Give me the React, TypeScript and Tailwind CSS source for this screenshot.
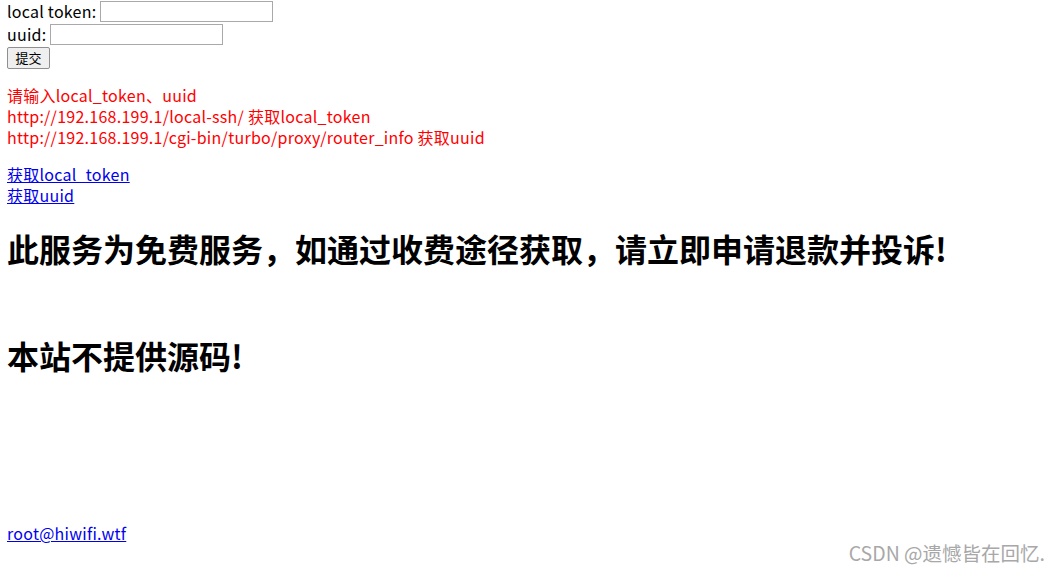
import React from "react";

const font = '"Noto Sans CJK SC", sans-serif';

export default function App() {
  return (
    <div
      className="relative h-[573px] w-[1059px] overflow-hidden bg-white px-[7px] text-[16px] text-black"
      style={{ fontFamily: font }}
    >
      <form onSubmit={(e) => e.preventDefault()} className="tracking-[0.25px]">
        <div className="flex h-[23px] items-center leading-[21px]">
          <span>local token:</span>
          <input className="ml-[4px] h-[21px] w-[173px] border border-[#a9a9a9] bg-white px-1 outline-none" />
        </div>
        <div className="flex h-[23px] items-center leading-[21px]">
          <span>uuid:</span>
          <input className="ml-[4px] h-[21px] w-[173px] border border-[#a9a9a9] bg-white px-1 outline-none" />
        </div>
        <div className="flex h-[24px] items-center">
          <button
            type="submit"
            className="h-[22px] w-[43px] rounded-[2px] border border-[#8f8f8f] bg-[#efefef] text-[13px] leading-[18px] tracking-normal"
          >
            提交
          </button>
        </div>
      </form>

      <div className="mt-[15px] leading-[21px] tracking-[0.26px] text-[#ff0000]">
        <div>请输入local_token、uuid</div>
        <div>http://192.168.199.1/local-ssh/ 获取local_token</div>
        <div>http://192.168.199.1/cgi-bin/turbo/proxy/router_info 获取uuid</div>
      </div>

      <div className="mt-[16px] leading-[21px] tracking-[0.26px]">
        <div>
          <a href="#" className="text-[#0000ee] underline">
            获取local_token
          </a>
        </div>
        <div>
          <a href="#" className="text-[#0000ee] underline">
            获取uuid
          </a>
        </div>
      </div>

      <h1 className="mt-[21px] text-[32px] font-bold leading-[42px]">
        此服务为免费服务，如通过收费途径获取，请立即申请退款并投诉!
      </h1>
      <h1 className="mt-[65px] text-[32px] font-bold leading-[42px]">本站不提供源码!</h1>

      <div className="mt-[147px] leading-[21px] tracking-[0.26px]">
        <a href="#" className="text-[#0000ee] underline">
          root@hiwifi.wtf
        </a>
      </div>

      <div className="absolute right-[14px] top-[541px] text-[19.5px] leading-[24px] text-[#a8a8a8]">
        CSDN @遗憾皆在回忆.
      </div>
    </div>
  );
}
